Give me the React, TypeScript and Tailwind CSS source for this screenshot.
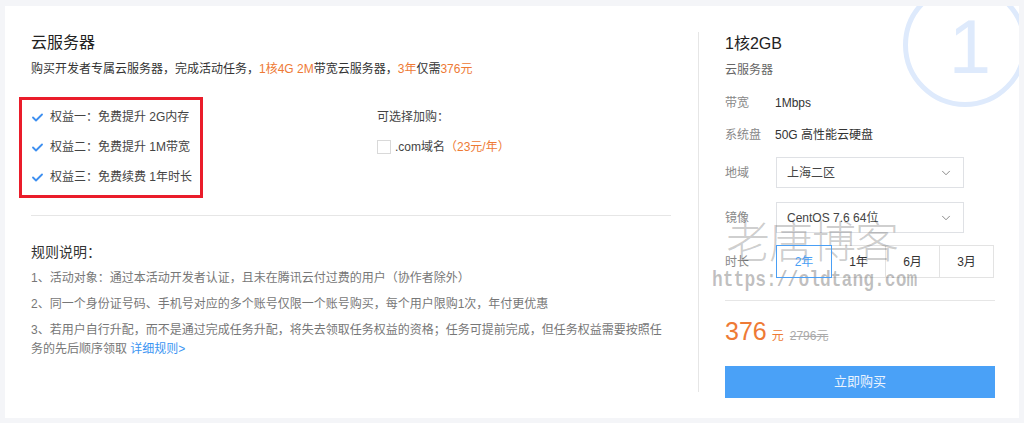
import { ChevronDown } from 'lucide-react'

const benefits = ['权益一：免费提升 2G内存', '权益二：免费提升 1M带宽', '权益三：免费续费 1年时长']

const rules = [
  '1、活动对象：通过本活动开发者认证，且未在腾讯云付过费的用户（协作者除外）',
  '2、同一个身份证号码、手机号对应的多个账号仅限一个账号购买，每个用户限购1次，年付更优惠',
]

const durations = ['2年', '1年', '6月', '3月']

function Check() {
  return (
    <svg width="11" height="9" viewBox="0 0 11 9" className="shrink-0">
      <polyline points="1,4.5 4,7.5 10,1.5" fill="none" stroke="#3d8ff0" strokeWidth="1.8" strokeLinecap="round" strokeLinejoin="round" />
    </svg>
  )
}

function Select({ value }: { value: string }) {
  return (
    <div className="flex h-[31px] w-[188px] items-center justify-between border border-[#dfe1e5] pl-[10px] pr-[10px] text-[12px] text-[#444]">
      <span>{value}</span>
      <ChevronDown size={14} strokeWidth={1.3} className="text-[#666]" />
    </div>
  )
}

export default function App() {
  return (
    <div className="relative h-[423px] w-[1024px] overflow-hidden bg-[#f4f5f8] pl-[5px] pt-[6px] font-['Liberation_Sans','Noto_Sans_CJK_SC',sans-serif]">
      <div className="relative flex h-[412px] w-[1014px] overflow-hidden bg-white">
        {/* big step number */}
        <div className="absolute left-[898px] top-[-23px] flex h-[124px] w-[124px] items-center justify-center rounded-full border-[5px] border-[#deeafc]">
          <span className="mt-[4px] ml-[10px] text-[76px] font-light leading-none text-[#deeafc]">1</span>
        </div>

        {/* left column */}
        <div className="w-[640px] shrink-0 pl-[26px] pt-[25px]" style={{ boxSizing: 'content-box' }}>
          <h1 className="text-[16px] leading-[24px] text-[#222]">云服务器</h1>
          <p className="mt-[4px] text-[12px] leading-[20px] text-[#333]">
            购买开发者专属云服务器，完成活动任务，<span className="text-[#ee7a35]">1核4G 2M</span>带宽云服务器，
            <span className="text-[#ee7a35]">3年</span>仅需<span className="text-[#ee7a35]">376元</span>
          </p>

          <div className="mt-[18px] flex">
            <div className="-ml-[12px] h-[101px] w-[184px] shrink-0 border-[3px] border-[#ea1c2a] pl-[10px] pt-[2px]">
              {benefits.map((b) => (
                <div key={b} className="flex h-[30px] items-center gap-[7px] text-[12px] text-[#444]">
                  <Check />
                  <span>{b}</span>
                </div>
              ))}
            </div>
            <div className="ml-[174px] pt-[5px] text-[12px] text-[#444]">
              <div className="flex h-[30px] items-center">可选择加购：</div>
              <div className="flex h-[30px] items-center">
                <span className="h-[14px] w-[14px] border border-[#d9d9d9]" />
                <span className="ml-[4px]">.com域名</span>
                <span className="text-[#ee7a35]">（23元/年）</span>
              </div>
            </div>
          </div>

          <div className="mt-[17px] h-px w-[640px] bg-[#e6e6e6]" />

          <h2 className="mt-[26px] text-[14px] leading-[20px] text-[#333]">规则说明：</h2>
          <div className="mt-[7px] text-[12px] leading-[19px] text-[#777]">
            {rules.map((r) => (
              <p key={r} className="mb-[7px]">{r}</p>
            ))}
            <p>
              3、若用户自行升配，而不是通过完成任务升配，将失去领取任务权益的资格；任务可提前完成，但任务权益需要按照任务的先后顺序领取{' '}
              <span className="text-[#3b95f2]">详细规则&gt;</span>
            </p>
          </div>
        </div>

        {/* right column */}
        <div className="ml-[27px] mt-[26px] h-[360px] w-[270px] border-l border-[#e6e6e6] pl-[26px]" style={{ boxSizing: 'content-box' }}>
          <div className="text-[16px] leading-[24px] text-[#222]">1核2GB</div>
          <div className="mt-[4px] text-[12px] leading-[20px] text-[#666]">云服务器</div>

          <div className="mt-[13px] flex text-[12px] leading-[20px]">
            <span className="w-[50px] text-[#888]">带宽</span>
            <span className="text-[#333]">1Mbps</span>
          </div>
          <div className="mt-[12px] flex text-[12px] leading-[20px]">
            <span className="w-[50px] text-[#888]">系统盘</span>
            <span className="text-[#333]">50G 高性能云硬盘</span>
          </div>

          <div className="mt-[12px] flex items-center text-[12px]">
            <span className="w-[51px] text-[#888]">地域</span>
            <Select value="上海二区" />
          </div>
          <div className="mt-[14px] flex items-center text-[12px]">
            <span className="w-[51px] text-[#888]">镜像</span>
            <Select value="CentOS 7.6 64位" />
          </div>

          <div className="mt-[12px] flex items-center text-[12px]">
            <span className="w-[51px] text-[#888]">时长</span>
            <div className="flex">
              {durations.map((d, i) => (
                <div
                  key={d}
                  className={
                    i === 0
                      ? 'relative z-10 flex h-[33px] w-[56px] items-center justify-center border border-[#4a9ff5] text-[#4a9ff5]'
                      : '-ml-px flex h-[33px] w-[55px] items-center justify-center border border-[#e3e3e3] text-[#333]'
                  }
                >
                  {d}
                </div>
              ))}
            </div>
          </div>

          <div className="mt-[22px] h-px w-[270px] bg-[#e6e6e6]" />

          <div className="mt-[14px] flex items-baseline leading-[32px]">
            <span className="text-[25px] text-[#ee7a35]">376</span>
            <span className="ml-[5px] text-[12px] text-[#ee7a35]">元</span>
            <span className="ml-[6px] text-[12px] text-[#aaa] line-through">2796元</span>
          </div>

          <button className="mt-[14px] flex h-[32px] w-[270px] items-center justify-center bg-[#4aa1f7] text-[13px] text-[#eaf3fe]">
            立即购买
          </button>
        </div>
      </div>

      {/* watermark */}
      <div className="pointer-events-none absolute left-[712px] top-[218px] flex flex-col">
        <span className="ml-[14px] text-[44px] font-light leading-[50px] tracking-[-1px] text-[#000]/20">老唐博客</span>
        <span className="-mt-[2px] inline-block origin-top scale-y-125 font-['Liberation_Mono',monospace] text-[18px] font-bold leading-[22px] text-[#000]/25">
          https://oldtang.com
        </span>
      </div>
    </div>
  )
}
